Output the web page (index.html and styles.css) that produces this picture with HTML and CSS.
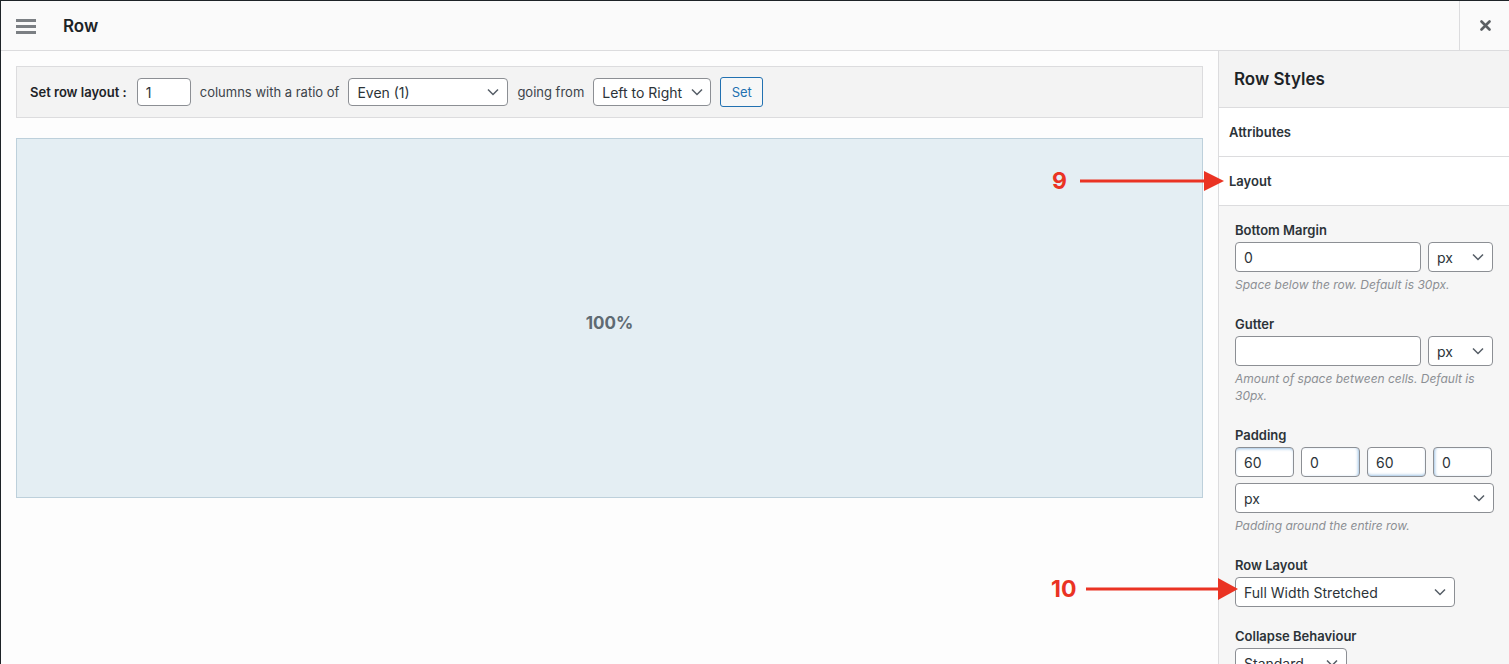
FILE: index.html
```html
<!DOCTYPE html>
<html lang="en">
<head>
  <meta charset="UTF-8">
  <title>Row - Page Builder</title>
  <link rel="stylesheet" href="styles.css">
</head>
<body>
  <div class="dialog">
    <header class="dialog-header">
      <button class="menu-toggle" aria-label="Menu">
        <svg width="20" height="16" viewBox="0 0 20 16"><rect x="0" y="1" width="20" height="3" fill="#7b7f83"/><rect x="0" y="7" width="20" height="3" fill="#7b7f83"/><rect x="0" y="13" width="20" height="3" fill="#7b7f83"/></svg>
      </button>
      <h1 class="dialog-title">Row</h1>
      <button class="dialog-close" aria-label="Close">
        <svg width="11" height="11" viewBox="0 0 11 11"><path d="M1.5 1.5 L9.5 9.5 M9.5 1.5 L1.5 9.5" stroke="#5b5f63" stroke-width="2.6" stroke-linecap="round"/></svg>
      </button>
    </header>

    <div class="dialog-body">
      <main class="builder">
        <div class="row-toolbar">
          <label class="toolbar-label">Set row layout&nbsp;:</label>
          <input class="field cols-input" type="text" value="1">
          <span>columns with a ratio of</span>
          <select class="field select ratio-select"><option>Even (1)</option></select>
          <span>going from</span>
          <select class="field select dir-select"><option>Left to Right</option></select>
          <button class="set-button">Set</button>
        </div>
        <div class="row-preview">
          <div class="cell-width">100%</div>
        </div>
      </main>

      <aside class="sidebar">
        <div class="sidebar-title">Row Styles</div>
        <div class="sidebar-tab">Attributes</div>
        <div class="sidebar-tab">Layout</div>
        <div class="sidebar-fields">
          <div class="field-group">
            <div class="field-label">Bottom Margin</div>
            <div class="field-row">
              <input class="field wide" type="text" value="0">
              <select class="field select unit"><option>px</option></select>
            </div>
            <div class="field-desc">Space below the row. Default is 30px.</div>
          </div>
          <div class="field-group">
            <div class="field-label">Gutter</div>
            <div class="field-row">
              <input class="field wide" type="text" value="">
              <select class="field select unit"><option>px</option></select>
            </div>
            <div class="field-desc">Amount of space between cells. Default is 30px.</div>
          </div>
          <div class="field-group">
            <div class="field-label">Padding</div>
            <div class="pad-row">
              <input class="field pad pad-top" type="text" value="60">
              <input class="field pad pad-right" type="text" value="0">
              <input class="field pad pad-bottom" type="text" value="60">
              <input class="field pad pad-left" type="text" value="0">
            </div>
            <select class="field select pad-unit"><option>px</option></select>
            <div class="field-desc">Padding around the entire row.</div>
          </div>
          <div class="field-group no-desc">
            <div class="field-label">Row Layout</div>
            <select class="field select layout-select"><option>Full Width Stretched</option></select>
          </div>
          <div class="field-group">
            <div class="field-label">Collapse Behaviour</div>
            <select class="field select collapse-select"><option>Standard</option></select>
          </div>
        </div>
      </aside>
    </div>

    <!-- tutorial callouts -->
    <div class="callout callout-9">
      <span class="callout-num">9</span>
      <svg width="145" height="22" viewBox="0 0 145 22"><rect x="0" y="9.5" width="126" height="3" fill="#ea3323"/><polygon points="124,1 144,11 124,21" fill="#ea3323"/></svg>
    </div>
    <div class="callout callout-10">
      <span class="callout-num">10</span>
      <svg width="153" height="24" viewBox="0 0 153 24"><rect x="0" y="10.5" width="134" height="3" fill="#ea3323"/><polygon points="132,1 152,12 132,23" fill="#ea3323"/></svg>
    </div>
  </div>
</body>
</html>
```

FILE: styles.css
```css
html, body {
  margin: 0;
  padding: 0;
  height: 100%;
  overflow: hidden;
  font-family: Inter, "Noto Sans", sans-serif;
  font-size: 13px;
  color: #3c434a;
  background: #fdfdfd;
}
.dialog {
  position: relative;
  height: 100%;
  box-sizing: border-box;
  border-top: 1px solid #1d2327;
  border-left: 1px solid #1d2327;
  display: flex;
  flex-direction: column;
}
.dialog-header {
  display: flex;
  align-items: center;
  height: 49px;
  flex-shrink: 0;
  background: #fafafa;
  border-bottom: 1px solid #dcdcde;
}
.menu-toggle {
  border: none;
  background: none;
  padding: 0;
  margin-left: 15px;
  width: 20px;
  height: 16px;
  display: flex;
}
.dialog-title {
  margin: 0 0 0 27px;
  font-size: 17px;
  font-weight: 600;
  color: #1d2327;
  flex: 1;
}
.dialog-close {
  width: 50px;
  height: 49px;
  border: none;
  border-left: 1px solid #dcdcde;
  background: none;
  display: flex;
  align-items: center;
  justify-content: center;
  padding: 0 0 0 2px;
}
.dialog-body {
  flex: 1;
  display: flex;
  min-height: 0;
}
.builder {
  flex: 1;
  padding: 15px;
  background: #fdfdfd;
}
.row-toolbar {
  display: flex;
  align-items: center;
  gap: 9px;
  padding: 10px 13px;
  background: #f3f3f3;
  border: 1px solid #dcdcde;
}
.toolbar-label {
  font-weight: 600;
  color: #1d2327;
  margin-right: 1px;
}
.field {
  box-sizing: border-box;
  height: 28px;
  border: 1px solid #8c8f94;
  border-radius: 4px;
  background-color: #fff;
  font-family: inherit;
  font-size: 14px;
  color: #2c3338;
  padding: 0 8px;
  margin: 0;
}
.select {
  appearance: none;
  -webkit-appearance: none;
  padding-right: 26px;
  background-image: url("data:image/svg+xml;utf8,<svg xmlns='http://www.w3.org/2000/svg' width='12' height='8' viewBox='0 0 12 8'><path d='M1 1.5 L6 6.5 L11 1.5' fill='none' stroke='%23555d66' stroke-width='1.5'/></svg>");
  background-repeat: no-repeat;
  background-position: right 8px center;
}
.cols-input { width: 54px; }
.ratio-select { width: 160px; }
.dir-select {
  width: 118px;
  padding-right: 22px;
  background-position: right 7px center;
}
.set-button {
  height: 30px;
  width: 43px;
  border: 1px solid #2271b1;
  border-radius: 3px;
  background: #f6f7f7;
  color: #2271b1;
  font-family: inherit;
  font-size: 13px;
  padding: 0;
}
.row-preview {
  margin-top: 20px;
  height: 360px;
  box-sizing: border-box;
  background: #e4eef3;
  border: 1px solid #bdd0db;
  display: flex;
  align-items: center;
  justify-content: center;
}
.cell-width {
  font-size: 17px;
  font-weight: 700;
  color: #5e6a72;
  margin-top: 10px;
}
.sidebar {
  width: 290px;
  flex-shrink: 0;
  border-left: 1px solid #dcdcde;
  background: #f6f6f6;
}
.sidebar-title {
  height: 57px;
  box-sizing: border-box;
  padding: 0 15px;
  display: flex;
  align-items: center;
  font-size: 17px;
  font-weight: 600;
  color: #1d2327;
  background: #f3f3f3;
  border-bottom: 1px solid #dcdcde;
}
.sidebar-tab {
  height: 49px;
  box-sizing: border-box;
  padding: 0 10px;
  display: flex;
  align-items: center;
  font-weight: 600;
  color: #2c3338;
  background: #fff;
  border-bottom: 1px solid #dcdcde;
}
.sidebar-fields {
  padding: 16px 16px 0;
}
.field-group {
  margin-bottom: 23px;
}
.field-group.no-desc {
  margin-bottom: 21px;
}
.field-label {
  font-weight: 600;
  color: #2c3338;
  line-height: 17px;
  margin-bottom: 3px;
}
.field-row {
  display: flex;
  gap: 7px;
}
.field-row .field,
.pad-row .field,
.pad-unit {
  height: 30px;
}
.wide { width: 186px; }
.unit { width: 65px; }
.pad-row {
  display: flex;
  gap: 7px;
}
.pad { width: 59px; }
.pad-top { box-shadow: inset 0 2px 3px -1px #9fc3e4; }
.pad-right { box-shadow: inset -2px 0 3px -1px #9fc3e4; }
.pad-bottom { box-shadow: inset 0 -2px 3px -1px #9fc3e4; }
.pad-left { box-shadow: inset 2px 0 3px -1px #9fc3e4; }
.pad-unit {
  display: block;
  width: 259px;
  margin-top: 6px;
}
.layout-select {
  width: 220px;
  height: 30px;
}
.collapse-select {
  width: 112px;
  height: 30px;
}
.field-desc {
  margin-top: 4px;
  font-size: 12px;
  font-style: italic;
  line-height: 17px;
  color: #8c8f94;
  padding-right: 10px;
}
.callout {
  position: absolute;
  display: flex;
  align-items: center;
}
.callout-num {
  font-size: 23px;
  font-weight: 700;
  color: #ea3323;
  margin-right: 13px;
}
.callout-9 {
  left: 1051px;
  top: 166px;
}
.callout-10 {
  left: 1050px;
  top: 574px;
}
.callout-10 .callout-num {
  margin-right: 10px;
}
```
